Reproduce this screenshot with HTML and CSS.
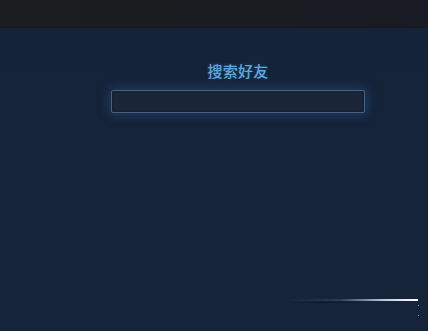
FILE: index.html
```html
<!DOCTYPE html>
<html lang="zh">
<head>
<meta charset="utf-8">
<link rel="stylesheet" href="styles.css">
</head>
<body>
<div class="topbar"></div>
<main class="main">
  <section class="search">
    <h1 class="title">搜索好友</h1>
    <input class="field" type="text">
  </section>
  <div class="streak-wrap">
    <div class="streak">
      <div class="streak-line"></div>
      <div class="streak-trail"></div>
    </div>
    <div class="dots"><span class="dot"></span><span class="dot"></span></div>
  </div>
</main>
</body>
</html>
```
FILE: styles.css
```css
html, body {
  margin: 0;
  padding: 0;
  width: 428px;
  height: 331px;
  overflow: hidden;
  background: #15233a;
  font-family: "Noto Sans CJK SC", "Noto Sans", sans-serif;
}
.topbar {
  height: 26px;
  background: linear-gradient(90deg, #1c1d1f 0%, #1a1c21 60%, #181a24 100%);
  border-bottom: 2px solid #16191e;
}
.main {
  height: 303px;
  display: flex;
  flex-direction: column;
  background: linear-gradient(180deg, #152339 0%, #16243a 100%);
}
.search {
  display: flex;
  flex-direction: column;
  align-items: center;
  padding: 32px 0 0 48px;
}
.title {
  margin: 0;
  font-size: 15px;
  font-weight: 500;
  line-height: 22px;
  color: #5ba8dc;
  letter-spacing: 0.3px;
  text-shadow: 0 0 3px rgba(70, 140, 200, 0.35);
}
.field {
  margin-top: 8px;
  width: 254px;
  height: 23px;
  box-sizing: border-box;
  background: #1a2535;
  border: 1px solid #45627f;
  border-radius: 2px;
  box-shadow: 0 0 10px 3px rgba(45, 95, 150, 0.35), inset 0 0 2px rgba(0,0,0,0.4);
  outline: none;
}
.streak-wrap {
  margin-top: auto;
  margin-bottom: 15px;
  display: flex;
  justify-content: flex-end;
  align-items: flex-start;
  padding-right: 9px;
}
.streak {
  width: 131px;
  padding-top: 2px;
  display: flex;
  flex-direction: column;
  gap: 1px;
}
.streak-line {
  height: 2px;
  background: linear-gradient(90deg, rgba(40,60,90,0) 0%, rgba(60,80,110,0.5) 40%, #c0ccda 75%, #ffffff 100%);
}
.streak-trail {
  width: 60%;
  height: 1px;
  background: linear-gradient(90deg, rgba(20,30,45,0) 0%, rgba(10,20,35,0.8) 50%, rgba(10,20,35,0) 100%);
}
.dots {
  display: flex;
  flex-direction: column;
  gap: 9px;
  padding-top: 8px;
}
.dot {
  width: 1px;
  height: 1px;
  background: #7a8aa0;
}
```
